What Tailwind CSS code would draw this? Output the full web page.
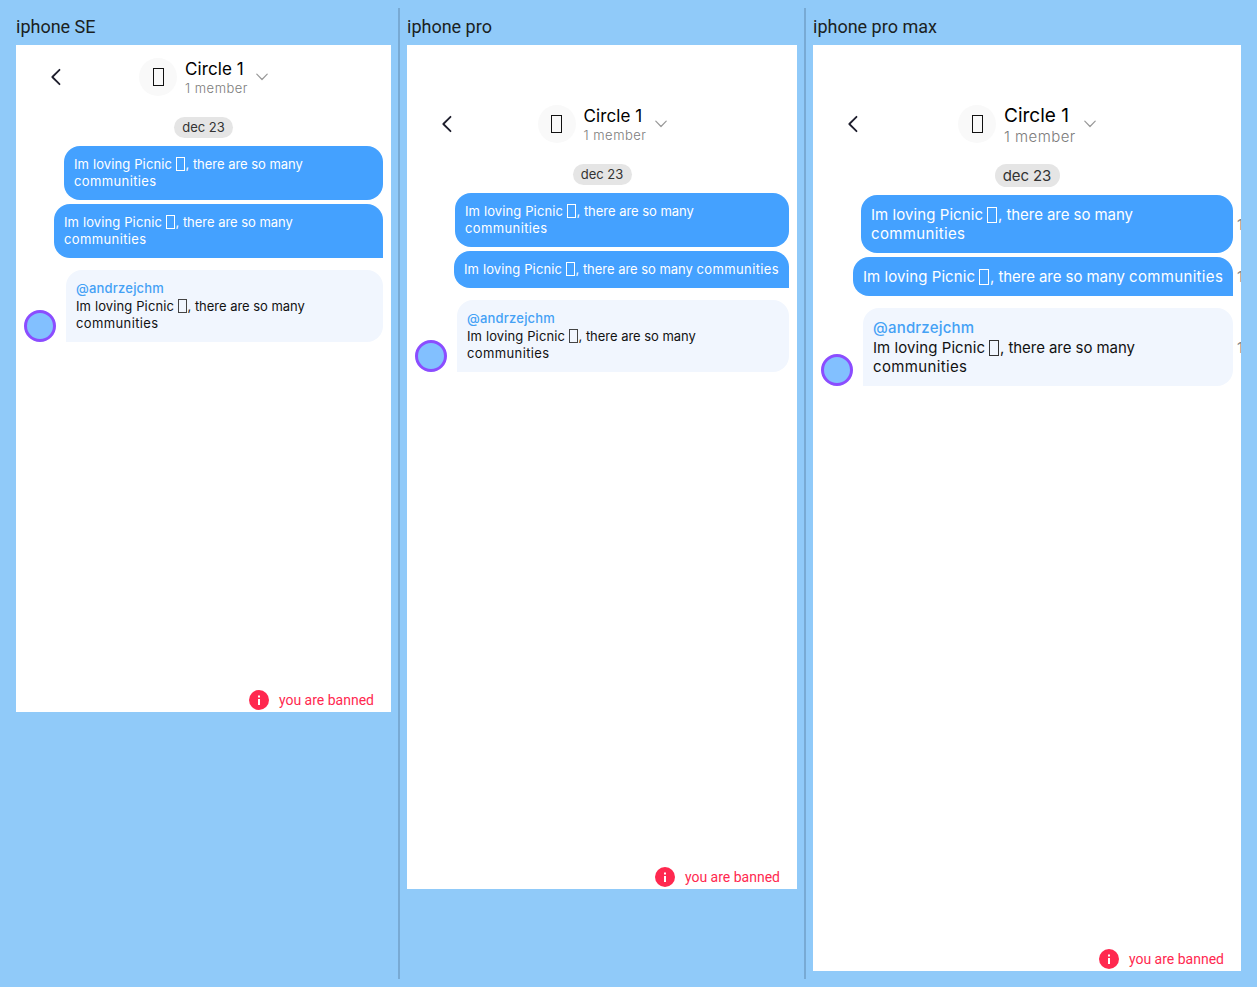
<!DOCTYPE html>
<html lang="en">
<head>
<meta charset="utf-8">
<title>Circle chat</title>
<script src="https://cdn.jsdelivr.net/npm/@tailwindcss/browser@4"></script>
</head>
<body class="flex h-[987px] overflow-hidden bg-[#90caf9] p-2 font-['Inter',sans-serif] text-[13px] leading-[17px] text-[#121212]">

<!-- iphone SE -->
<section class="w-[390px] shrink-0 pl-2">
  <h2 class="h-[37px] pt-1.5 font-['Roboto',sans-serif] text-lg leading-[26px] text-[#1b1f22]">iphone SE</h2>
  <div class="flex h-[667px] w-[375px] flex-col overflow-hidden bg-white">
    <header class="grid h-16 shrink-0 grid-cols-[80px_1fr_80px] items-center">
      <svg class="ml-[34px] h-5 w-3" viewBox="0 0 12 20" fill="none" stroke="#1d1d2c" stroke-width="1.8" stroke-linecap="round" stroke-linejoin="round"><path d="M9.500 2.800 2.300 10l7.200 7.200"/></svg>
      <div class="flex items-center justify-center">
        <div class="flex size-[38px] items-center justify-center rounded-full bg-[#f9f9f9]"><i class="h-[18px] w-[11px] border-[1.5px] border-[#111]"></i></div>
        <div class="ml-2 w-[63px] whitespace-nowrap"><p class="text-[17px] leading-[22px] tracking-[.1px] text-black">Circle 1</p><p class="font-light tracking-[.5px] text-[#7c7c7c]">1 member</p></div>
        <svg class="ml-2 h-2 w-3" viewBox="0 0 12 8" fill="none" stroke="#999" stroke-width="1.200" stroke-linecap="round" stroke-linejoin="round"><path d="m.8 1.200 5.200 5.300 5.200-5.300"/></svg>
      </div>
    </header>
    <main class="flex flex-1 flex-col items-end px-2 pt-2">
      <div class="flex h-[21px] w-[59px] items-center justify-center self-center rounded-full bg-[#e5e5e5] text-[#333]">dec 23</div>
      <div class="mt-2 h-[54px] w-[319px] rounded-[16px] bg-[#44a1ff] p-2.5 text-white"><span class="tracking-[.12px]">Im loving Picnic</span><i class="mr-px ml-[3.500px] inline-block h-[14px] w-[9px] border border-current align-[-2px]"></i><span class="tracking-[-.03px]">, there are so many</span><br><span class="tracking-[.38px]">communities</span></div>
      <div class="mt-1 h-[54px] w-[329px] rounded-[16px] rounded-br-none bg-[#44a1ff] p-2.5 text-white"><span class="tracking-[.12px]">Im loving Picnic</span><i class="mr-px ml-[3.500px] inline-block h-[14px] w-[9px] border border-current align-[-2px]"></i><span class="tracking-[-.03px]">, there are so many</span><br><span class="tracking-[.38px]">communities</span></div>
      <div class="mt-3 flex w-full items-end justify-between">
        <div class="size-8 rounded-full border-[3px] border-[#8b4dff] bg-[#82c0ff]"></div>
        <div class="h-[72px] w-[317px] rounded-[16px] rounded-bl-none bg-[#f1f6fe] p-2.5"><p class="mb-px font-medium tracking-[.2px] text-[#44a1f5]">@andrzejchm</p><span class="tracking-[.12px]">Im loving Picnic</span><i class="mr-px ml-[3.500px] inline-block h-[14px] w-[9px] border border-[#444] align-[-2px]"></i><span class="tracking-[-.03px]">, there are so many</span><br><span class="tracking-[.38px]">communities</span></div>
      </div>
    </main>
    <footer class="flex h-6 items-center justify-end gap-2.5 pr-[17px] font-['Roboto',sans-serif] text-sm text-[#ff284f]"><svg class="size-5" viewBox="0 0 20 20"><circle cx="10" cy="10" r="10" fill="#ff284f"/><path d="M9 5.500h2v2H9zm0 3.500h2v6H9z" fill="#fff"/></svg>you are banned</footer>
  </div>
</section>
<div class="h-[971px] w-0.5 shrink-0 bg-[#78aad4]"></div>

<!-- iphone pro -->
<section class="w-[404px] shrink-0 pl-[7px]">
  <h2 class="h-[37px] pt-1.5 font-['Roboto',sans-serif] text-lg leading-[26px] text-[#1b1f22]">iphone pro</h2>
  <div class="flex h-[844px] w-[390px] flex-col overflow-hidden bg-white pt-[47px]">
    <header class="grid h-16 shrink-0 grid-cols-[80px_1fr_80px] items-center">
      <svg class="ml-[34px] h-5 w-3" viewBox="0 0 12 20" fill="none" stroke="#1d1d2c" stroke-width="1.8" stroke-linecap="round" stroke-linejoin="round"><path d="M9.500 2.800 2.300 10l7.200 7.200"/></svg>
      <div class="flex items-center justify-center">
        <div class="flex size-[38px] items-center justify-center rounded-full bg-[#f9f9f9]"><i class="h-[18px] w-[11px] border-[1.5px] border-[#111]"></i></div>
        <div class="ml-2 w-[63px] whitespace-nowrap"><p class="text-[17px] leading-[22px] tracking-[.1px] text-black">Circle 1</p><p class="font-light tracking-[.5px] text-[#7c7c7c]">1 member</p></div>
        <svg class="ml-2 h-2 w-3" viewBox="0 0 12 8" fill="none" stroke="#999" stroke-width="1.200" stroke-linecap="round" stroke-linejoin="round"><path d="m.8 1.200 5.200 5.300 5.200-5.300"/></svg>
      </div>
    </header>
    <main class="flex flex-1 flex-col items-end px-2 pt-2">
      <div class="flex h-[21px] w-[59px] items-center justify-center self-center rounded-full bg-[#e5e5e5] text-[#333]">dec 23</div>
      <div class="mt-2 h-[54px] w-[334px] rounded-[16px] bg-[#44a1ff] p-2.5 text-white"><span class="tracking-[.12px]">Im loving Picnic</span><i class="mr-px ml-[3.500px] inline-block h-[14px] w-[9px] border border-current align-[-2px]"></i><span class="tracking-[-.03px]">, there are so many</span><br><span class="tracking-[.38px]">communities</span></div>
      <div class="mt-1 h-[37px] w-[335px] rounded-[16px] rounded-br-none bg-[#44a1ff] p-2.5 whitespace-nowrap text-white"><span class="tracking-[.12px]">Im loving Picnic</span><i class="mr-px ml-[3.500px] inline-block h-[14px] w-[9px] border border-current align-[-2px]"></i><span class="tracking-[-.03px]">, there are so many</span> <span class="tracking-[.38px]">communities</span></div>
      <div class="mt-3 flex w-full items-end justify-between">
        <div class="size-8 rounded-full border-[3px] border-[#8b4dff] bg-[#82c0ff]"></div>
        <div class="h-[72px] w-[332px] rounded-[16px] rounded-bl-none bg-[#f1f6fe] p-2.5"><p class="mb-px font-medium tracking-[.2px] text-[#44a1f5]">@andrzejchm</p><span class="tracking-[.12px]">Im loving Picnic</span><i class="mr-px ml-[3.500px] inline-block h-[14px] w-[9px] border border-[#444] align-[-2px]"></i><span class="tracking-[-.03px]">, there are so many</span><br><span class="tracking-[.38px]">communities</span></div>
      </div>
    </main>
    <footer class="flex h-6 items-center justify-end gap-2.5 pr-[17px] font-['Roboto',sans-serif] text-sm text-[#ff284f]"><svg class="size-5" viewBox="0 0 20 20"><circle cx="10" cy="10" r="10" fill="#ff284f"/><path d="M9 5.500h2v2H9zm0 3.500h2v6H9z" fill="#fff"/></svg>you are banned</footer>
  </div>
</section>
<div class="h-[971px] w-0.5 shrink-0 bg-[#78aad4]"></div>

<!-- iphone pro max -->
<section class="shrink-0 pl-[7px]">
  <h2 class="h-[37px] pt-1.5 font-['Roboto',sans-serif] text-lg leading-[26px] text-[#1b1f22]">iphone pro max</h2>
  <div class="flex h-[926px] w-[428px] flex-col overflow-hidden bg-white pt-[47px] text-[15px] leading-[19px]">
    <header class="grid h-16 shrink-0 grid-cols-[80px_1fr_80px] items-center">
      <svg class="ml-[34px] h-5 w-3" viewBox="0 0 12 20" fill="none" stroke="#1d1d2c" stroke-width="1.8" stroke-linecap="round" stroke-linejoin="round"><path d="M9.500 2.800 2.300 10l7.200 7.200"/></svg>
      <div class="flex items-center justify-center">
        <div class="flex size-[38px] items-center justify-center rounded-full bg-[#f9f9f9]"><i class="h-[18px] w-[11px] border-[1.5px] border-[#111]"></i></div>
        <div class="ml-2 w-[72px] whitespace-nowrap"><p class="pt-px text-[19px] leading-[23px] text-black">Circle 1</p><p class="font-light tracking-[.45px] text-[#7c7c7c]">1 member</p></div>
        <svg class="ml-2 h-2 w-3" viewBox="0 0 12 8" fill="none" stroke="#999" stroke-width="1.200" stroke-linecap="round" stroke-linejoin="round"><path d="m.8 1.200 5.200 5.300 5.200-5.300"/></svg>
      </div>
    </header>
    <main class="flex flex-1 flex-col items-end pt-2">
      <div class="flex h-[23px] w-[65px] items-center justify-center self-center rounded-full bg-[#e5e5e5] tracking-[-.1px] text-[#333]">dec 23</div>
      <div class="mt-2 flex items-center">
        <div class="h-[58px] w-[372px] rounded-[16px] bg-[#44a1ff] p-2.5 text-white"><span class="tracking-[.07px]">Im loving Picnic</span><i class="mr-px ml-[4px] inline-block h-[16px] w-[10px] border border-current align-[-3px]"></i><span class="tracking-[-.06px]">, there are so many</span><br><span class="tracking-[.35px]">communities</span></div>
        <span class="w-2 overflow-hidden pl-1 text-[#858585]">1</span>
      </div>
      <div class="mt-1 flex items-center">
        <div class="h-[39px] w-[380px] rounded-[16px] rounded-br-none bg-[#44a1ff] p-2.5 whitespace-nowrap text-white"><span class="tracking-[.07px]">Im loving Picnic</span><i class="mr-px ml-[4px] inline-block h-[16px] w-[10px] border border-current align-[-3px]"></i><span class="tracking-[-.06px]">, there are so many</span> <span class="tracking-[.33px]">communities</span></div>
        <span class="w-2 overflow-hidden pl-1 text-[#858585]">1</span>
      </div>
      <div class="mt-3 flex w-full items-end pl-2">
        <div class="size-8 rounded-full border-[3px] border-[#8b4dff] bg-[#82c0ff]"></div>
        <div class="ml-auto h-[78px] w-[370px] rounded-[16px] rounded-bl-none bg-[#f1f6fe] p-2.5"><p class="mb-px font-medium tracking-[.2px] text-[#44a1f5]">@andrzejchm</p><span class="tracking-[.07px]">Im loving Picnic</span><i class="mr-px ml-[4px] inline-block h-[16px] w-[10px] border border-[#333] align-[-3px]"></i><span class="tracking-[-.06px]">, there are so many</span><br><span class="tracking-[.35px]">communities</span></div>
        <span class="w-2 self-center overflow-hidden pl-1 text-[#858585]">1</span>
      </div>
    </main>
    <footer class="flex h-6 items-center justify-end gap-2.5 pr-[17px] font-['Roboto',sans-serif] text-sm text-[#ff284f]"><svg class="size-5" viewBox="0 0 20 20"><circle cx="10" cy="10" r="10" fill="#ff284f"/><path d="M9 5.500h2v2H9zm0 3.500h2v6H9z" fill="#fff"/></svg>you are banned</footer>
  </div>
</section>
</body>
</html>
